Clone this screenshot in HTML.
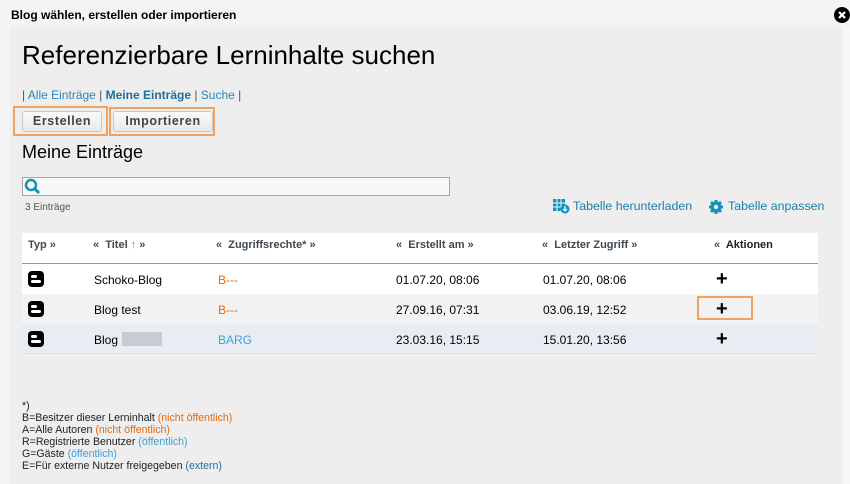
<!DOCTYPE html>
<html><head><meta charset="utf-8"><style>
*{margin:0;padding:0;box-sizing:border-box}
body{width:850px;height:484px;background:#f4f4f4;font-family:"Liberation Sans",sans-serif;position:relative;overflow:hidden;color:#000}
.a{position:absolute;white-space:nowrap}
.panel{position:absolute;left:10px;top:27px;width:832px;height:457px;background:#eeeeee}
.right{position:absolute;left:842px;top:27px;width:8px;height:457px;background:#f7f7f7}
.btn{position:absolute;height:21px;border:1px solid #c6c6c6;border-radius:3px;background:linear-gradient(#fafafa,#e9e9e9);font-size:12.5px;letter-spacing:0.6px;font-weight:bold;color:#444;text-align:center;line-height:19px}
.hl{position:absolute;border:2px solid #f0a35e}
.row{position:absolute;left:22px;width:796px;height:30px;font-size:12px}
.row span{position:absolute;top:9px}
.h{font-size:11px;font-weight:bold;color:#3f4850}
.ic{position:absolute;top:7px;left:6px;width:16px;height:16px;background:#000;border-radius:4px}
.ic i{position:absolute;background:#fff;border-radius:2px}
.plus{position:absolute;font-weight:bold;font-size:20px;top:4px!important}
.fn{font-size:10.6px;line-height:12px;color:#222}
.o{color:#e56a12}.b{color:#3fa0d8}
</style></head><body>
<div class="a" style="left:11px;top:8px;font-size:12px;font-weight:bold">Blog wählen, erstellen oder importieren</div>
<svg class="a" style="left:834px;top:7px" width="16" height="16"><circle cx="8" cy="8" r="8" fill="#000"/><path d="M5 5L11 11M11 5L5 11" stroke="#fff" stroke-width="2.2"/></svg>
<div class="panel"></div><div class="right"></div>
<div class="a" style="left:22px;top:40px;font-size:26px">Referenzierbare Lerninhalte suchen</div>
<div class="a" style="left:22px;top:88px;font-size:12px;color:#555">| <span style="color:#2a86b8">Alle Einträge</span> | <b style="color:#1f6f9a">Meine Einträge</b> | <span style="color:#2a86b8">Suche</span> |</div>
<div class="hl" style="left:13px;top:106px;width:95px;height:30px"></div>
<div class="hl" style="left:109px;top:107px;width:106px;height:29px"></div>
<div class="btn" style="left:22px;top:111px;width:80px">Erstellen</div>
<div class="btn" style="left:113px;top:111px;width:100px">Importieren</div>
<div class="a" style="left:22px;top:142px;font-size:18px">Meine Einträge</div>
<div class="a" style="left:22px;top:177px;width:428px;height:19px;border:1px solid #a8a8a8;background:#f7f7f7"></div>
<svg class="a" style="left:24px;top:178px" width="17" height="17"><circle cx="7" cy="7" r="5" fill="none" stroke="#1691b6" stroke-width="2.5"/><path d="M10.5 10.5L15 15" stroke="#1691b6" stroke-width="3"/></svg>
<div class="a" style="left:25px;top:202px;font-size:10px;color:#555">3 Einträge</div>
<svg class="a" style="left:553px;top:199px" width="17" height="15"><rect x="0" y="0" width="12" height="12" fill="#1691b6"/><path d="M0 4H12M0 8H12M4 0V12M8 0V12" stroke="#dff" stroke-width="1"/><circle cx="12" cy="10" r="4.5" fill="#1691b6"/><path d="M12 7V12M10 10L12 12L14 10" stroke="#fff" stroke-width="1.2" fill="none"/></svg>
<div class="a" style="left:573px;top:199px;font-size:12.4px;color:#1b7fa8">Tabelle herunterladen</div>
<svg class="a" style="left:708px;top:199px" width="16" height="16"><circle cx="8" cy="8" r="5.5" fill="#1691b6"/><path d="M8 1V15M1 8H15M3 3L13 13M13 3L3 13" stroke="#1691b6" stroke-width="3"/><circle cx="8" cy="8" r="2.2" fill="#eee"/></svg>
<div class="a" style="left:728px;top:199px;font-size:12.4px;color:#1b7fa8">Tabelle anpassen</div>
<div class="row h" style="top:233px;height:31px;background:#fff;border-bottom:1px solid #8c9aa6">
<span style="left:6px;top:6px">Typ »</span><span style="left:71px;top:6px">«&nbsp; Titel <b style="color:#e58">↑</b> »</span><span style="left:194px;top:6px">«&nbsp; Zugriffsrechte* »</span><span style="left:374px;top:6px">«&nbsp; Erstellt am »</span><span style="left:520px;top:6px">«&nbsp; Letzter Zugriff »</span><span style="left:692px;top:6px">«&nbsp; <span style="position:static;color:#222">Aktionen</span></span></div>
<div class="row" style="top:264px;background:#fff"><div class="ic"><i style="left:3px;top:4px;width:6px;height:3px"></i><i style="left:3px;top:9px;width:10px;height:3px"></i></div><span style="left:72px">Schoko-Blog</span><span class="o" style="left:196px">B---</span><span style="left:374px">01.07.20, 08:06</span><span style="left:521px">01.07.20, 08:06</span><span class="plus" style="left:694px">+</span></div>
<div class="row" style="top:294px;background:#f2f2f2"><div class="ic"><i style="left:3px;top:4px;width:6px;height:3px"></i><i style="left:3px;top:9px;width:10px;height:3px"></i></div><span style="left:72px">Blog test</span><span class="o" style="left:196px">B---</span><span style="left:374px">27.09.16, 07:31</span><span style="left:521px">03.06.19, 12:52</span><span class="plus" style="left:694px">+</span></div>
<div class="row" style="top:324px;background:#e8edf4;border-bottom:1px solid #dde"><div class="ic"><i style="left:3px;top:4px;width:6px;height:3px"></i><i style="left:3px;top:9px;width:10px;height:3px"></i></div><span style="left:72px">Blog</span><span style="left:100px;top:8px;width:40px;height:14px;background:#c8ccd2"></span><span class="b" style="left:196px">BARG</span><span style="left:374px">23.03.16, 15:15</span><span style="left:521px">15.01.20, 13:56</span><span class="plus" style="left:694px">+</span></div>
<div class="hl" style="left:697px;top:296px;width:56px;height:24px"></div>
<div class="a fn" style="left:22px;top:400px">*)<br>B=Besitzer dieser Lerninhalt <span class="o">(nicht öffentlich)</span><br>A=Alle Autoren <span class="o">(nicht öffentlich)</span><br>R=Registrierte Benutzer <span class="b">(öffentlich)</span><br>G=Gäste <span class="b">(öffentlich)</span><br>E=Für externe Nutzer freigegeben <span style="color:#1b6fa8">(extern)</span></div>
</body></html>
